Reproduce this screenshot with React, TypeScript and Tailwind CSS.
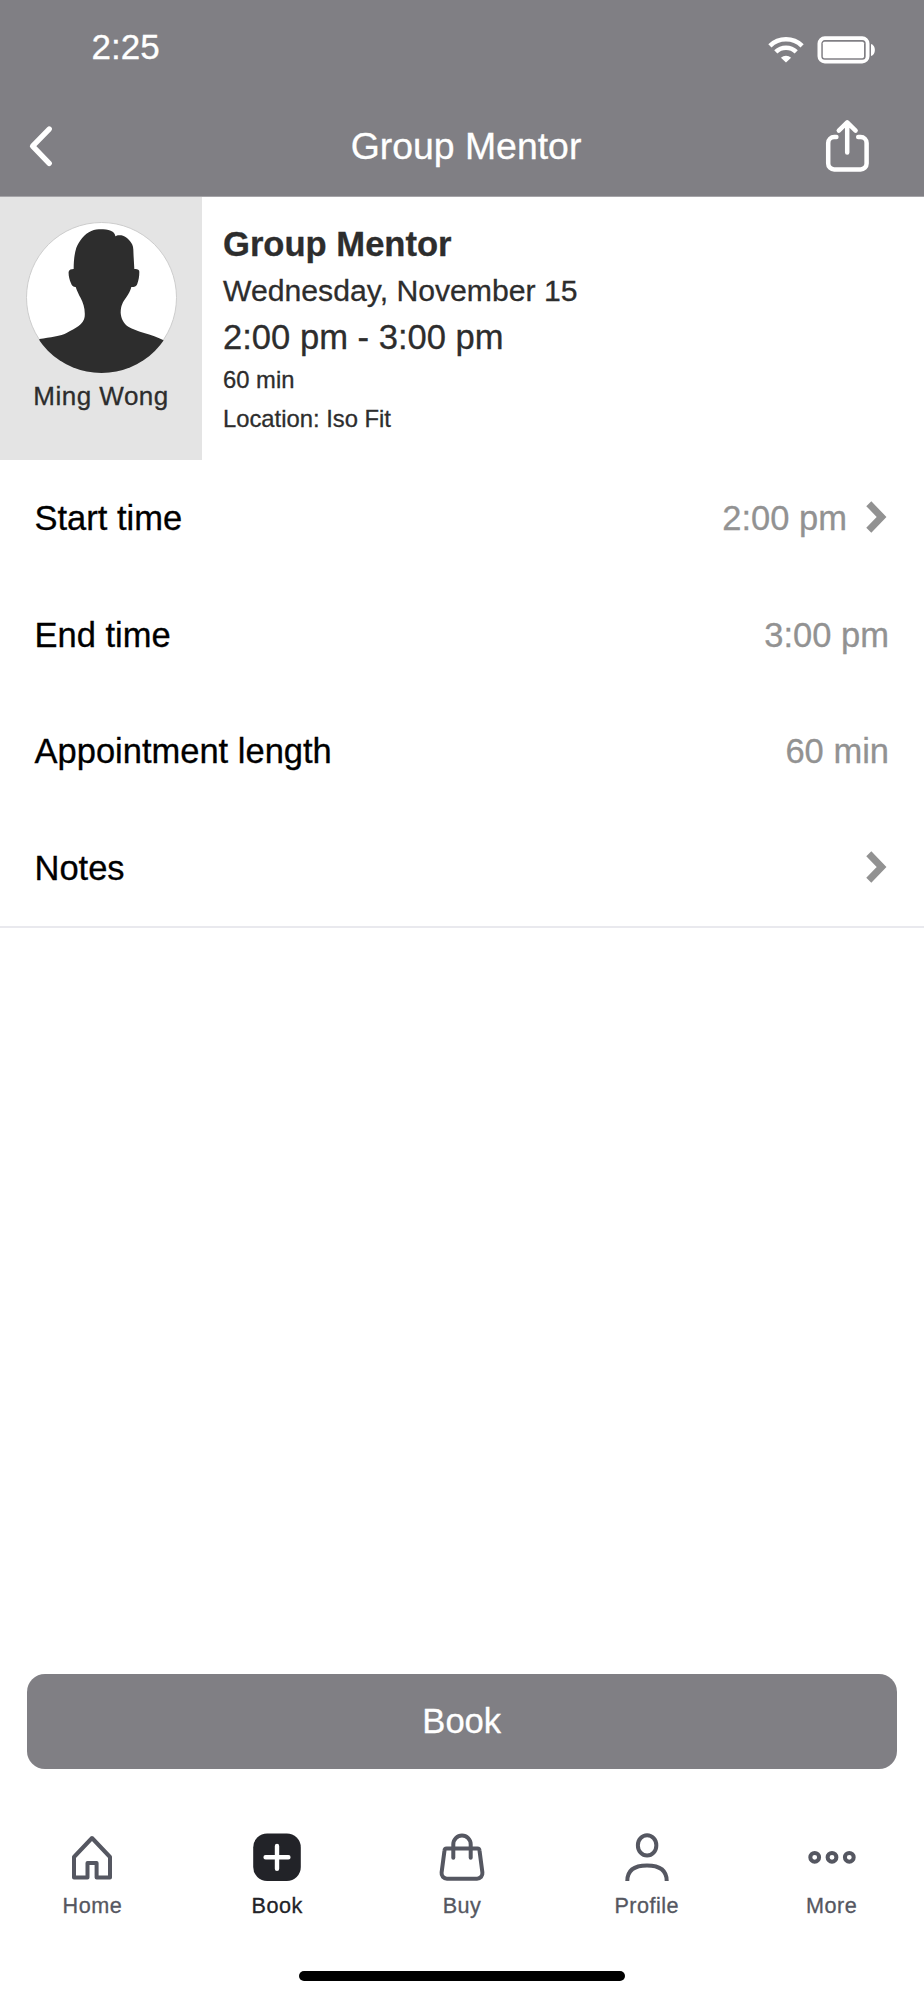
import React from "react";

function StatusBar() {
  return (
    <div className="flex h-[95px] items-center justify-between pl-[91.5px] pr-[48px] text-[35px] leading-[95px]">
      <span className="mb-[2px]">2:25</span>
      <div className="mt-[5px] flex items-center gap-[13px]">
        <svg className="h-[26px] w-[36px]" viewBox="0 0 36 26" fill="none" stroke="#fff">
          <path d="M1.9 8.8A23.2 23.2 0 0 1 34.1 8.8" strokeWidth="4.6" />
          <path d="M7.8 14.9A14.8 14.8 0 0 1 28.2 14.9" strokeWidth="4.6" />
          <path d="M18 25.6L12.9 20.7A7.4 7.4 0 0 1 23.1 20.7Z" fill="#fff" stroke="none" />
        </svg>
        <svg className="h-[28px] w-[59px]" viewBox="0 0 59 28" fill="none">
          <rect x="2.4" y="2.2" width="48.2" height="23.4" rx="5.4" stroke="#fff" strokeWidth="3.8" />
          <rect x="5.8" y="5.7" width="41.2" height="16.5" rx="1.6" fill="#fff" />
          <path d="M54 8C59.2 9.4 59.2 18.6 54 20Z" fill="#fff" />
        </svg>
      </div>
    </div>
  );
}

function Header() {
  return (
    <header className="h-[197px] border-b border-[#a5a4a8] bg-[#807f84] text-white">
      <StatusBar />
      <div className="flex h-[102px] items-center">
        <button className="flex w-[102px] pl-[27px]" aria-label="Back">
          <svg className="h-[44px] w-[28px] shrink-0" viewBox="0 0 28 44" fill="none" stroke="#fff" strokeWidth="5.4" strokeLinecap="round" strokeLinejoin="round">
            <path d="M22.2 5L5.6 22.2L22.2 39.4" />
          </svg>
        </button>
        <h1 className="flex-1 text-center text-[37.4px] leading-[102px]">Group Mentor</h1>
        <button className="flex w-[94px] justify-end pr-[51px]" aria-label="Share">
          <svg className="h-[56px] w-[52px] shrink-0" viewBox="0 0 52 56" fill="none" stroke="#fff" strokeWidth="4.5" strokeLinecap="round" strokeLinejoin="round">
            <path d="M15.4 19H13.2A6 6 0 0 0 7.2 25V45.4A6 6 0 0 0 13.2 51.4H39.6A6 6 0 0 0 45.6 45.4V25A6 6 0 0 0 39.6 19H37.2" />
            <path d="M26.2 34.4V4.6M17.8 12.7L26.2 4.4L34.6 12.7" />
          </svg>
        </button>
      </div>
    </header>
  );
}

function Avatar() {
  return (
    <svg className="h-[151px] w-[151px]" viewBox="0 0 453 453">
      <defs>
        <clipPath id="avatar-circle">
          <circle cx="226.5" cy="226.5" r="226.5" />
        </clipPath>
      </defs>
      <circle cx="226.5" cy="226.5" r="225" fill="#fff" stroke="#cdcdcd" strokeWidth="3" />
      <path
        clipPath="url(#avatar-circle)"
        fill="#2d2d2d"
        d="M143 141C143 118 145 96 151 77C158 60 176 34 196 27C206 22 216 22 226 22C240 21 252 24 260 29C265 33 268 38 268 43C272 39 279 39 286 40C299 42 314 57 319 68C323 76 322 90 323 106L325 141C334 140 340 143 340 149C340 164 338 174 334 185C331 194 325 195 316 195C313 207 308 215 302 224C290 241 284 250 284 272C285 288 292 304 307 314C325 327 380 337 413 355V453H40V351C72 346 105 342 123 332C147 319 174 306 176 284C178 262 172 243 164 228C158 217 154 209 149 195C141 195 138 192 135 184C130 172 127 158 128 149C129 143 136 141 143 141Z"
      />
    </svg>
  );
}

function Summary() {
  return (
    <section className="flex h-[263px] bg-white text-[#2d2d2d]">
      <div className="flex w-[202px] flex-col items-center bg-[#e4e4e4] pt-[25px]">
        <Avatar />
        <p className="text-[26px] leading-[46px] tracking-[0.5px]">Ming Wong</p>
      </div>
      <div className="flex-1 whitespace-nowrap pl-[21px] pt-[24px]">
        <h2 className="text-[34.6px] font-bold leading-[46px]">Group Mentor</h2>
        <p className="text-[30.2px] leading-[48px]">Wednesday, November 15</p>
        <p className="text-[34.6px] leading-[44px]">2:00 pm - 3:00 pm</p>
        <p className="text-[23.8px] leading-[42px]">60 min</p>
        <p className="text-[23.8px] leading-[36px]">Location: Iso Fit</p>
      </div>
    </section>
  );
}

function Row({ label, value, chevron }: { label: string; value?: string; chevron?: boolean }) {
  return (
    <div className="flex h-[116.6px] items-center pl-[34.5px] pr-[34px] text-[34.5px] leading-[116.6px]">
      <span className="flex-1 text-black">{label}</span>
      <span className="mr-px text-[#929292]">{value}</span>
      {chevron && (
        <svg className="mb-[3px] ml-[18px] h-[34px] w-[24px]" viewBox="0 0 24 34" fill="none" stroke="#929292" strokeWidth="7">
          <path d="M2.8 3.7L15.6 17L2.8 30.3" />
        </svg>
      )}
    </div>
  );
}

function Tab({ label, active, children }: { label: string; active?: boolean; children: React.ReactNode }) {
  return (
    <button className={`flex flex-1 flex-col items-center ${active ? "text-[#222328]" : "text-[#555761]"}`}>
      <svg className="h-[56px] w-[56px]" viewBox="0 0 56 56" fill="none" stroke="currentColor" strokeWidth="4">
        {children}
      </svg>
      <span className="text-[21.6px] leading-[42px] tracking-[0.5px]">{label}</span>
    </button>
  );
}

function TabBar() {
  return (
    <nav className="flex h-[142px]">
      <Tab label="Home">
        <path d="M28 9L46 28V48.4H32.6V34H23.5V48.4H10V28Z" strokeLinejoin="round" />
      </Tab>
      <Tab label="Book" active>
        <rect x="4.2" y="4.4" width="47.6" height="47.6" rx="14" fill="currentColor" stroke="none" />
        <path d="M28 16.9V39.7M16.6 28.3H39.4" stroke="#fff" strokeWidth="4.4" strokeLinecap="round" />
      </Tab>
      <Tab label="Buy">
        <path
          d="M12.6 19.4H43.4A2.2 2.2 0 0 1 45.5 21.4L48.4 43.6A5.4 5.4 0 0 1 43 49.7H13A5.4 5.4 0 0 1 7.6 43.6L10.5 21.4A2.2 2.2 0 0 1 12.6 19.4Z"
          strokeLinejoin="round"
        />
        <path d="M19.3 28.8V15.2A8.7 8.7 0 0 1 36.7 15.2V28.8" strokeLinecap="round" />
      </Tab>
      <Tab label="Profile">
        <rect x="18.9" y="6.2" width="18.4" height="20.4" rx="9.2" ry="9.8" />
        <path d="M8.3 52C8.3 41.2 15.5 36.6 28 36.6S47.7 41.2 47.7 52" />
      </Tab>
      <Tab label="More">
        <circle cx="10.7" cy="28.3" r="4.4" />
        <circle cx="28" cy="28.3" r="4.4" />
        <circle cx="45.3" cy="28.3" r="4.4" />
      </Tab>
    </nav>
  );
}

export default function App() {
  return (
    <div className="flex h-[2000px] w-[924px] flex-col bg-white font-['Liberation_Sans',Arial,sans-serif] [-webkit-text-stroke:0.3px]">
      <Header />
      <Summary />
      <main className="flex-1">
        <div className="border-b-2 border-[#e9e9ee]">
          <Row label="Start time" value="2:00 pm" chevron />
          <Row label="End time" value="3:00 pm" />
          <Row label="Appointment length" value="60 min" />
          <Row label="Notes" chevron />
        </div>
      </main>
      <div className="pb-[60px] pl-[27px] pr-[27.5px]">
        <button className="block h-[95px] w-full rounded-[18px] bg-[#807f84] text-[34.6px] leading-[95px] text-white">Book</button>
      </div>
      <TabBar />
      <div className="flex h-[29px] justify-center">
        <div className="h-[10px] w-[326px] rounded-full bg-black" />
      </div>
    </div>
  );
}
